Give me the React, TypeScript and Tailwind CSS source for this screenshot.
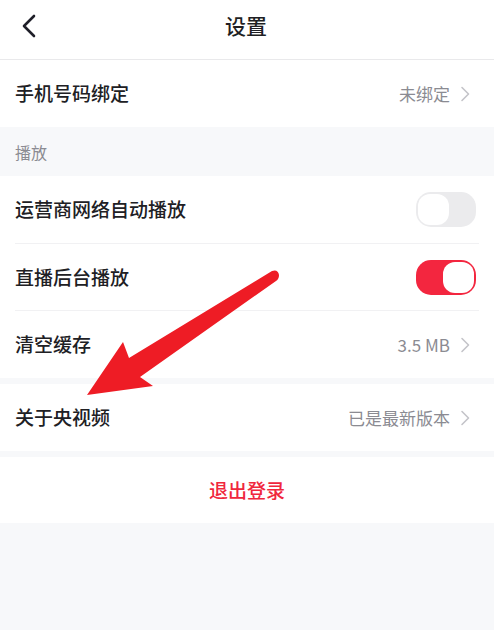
import type { ReactNode } from 'react'

const font = { fontFamily: '"Noto Sans CJK SC", "Noto Sans", sans-serif' }

function Chevron() {
  return (
    <svg width="12" height="16" viewBox="0 0 12 16" className="shrink-0">
      <path d="M3 1.5 L9.5 8 L3 14.5" fill="none" stroke="#c4c4c9" strokeWidth="1.6" strokeLinecap="round" strokeLinejoin="round" />
    </svg>
  )
}

function Toggle({ on }: { on: boolean }) {
  return (
    <div
      className={`w-[60px] h-[35px] mr-[3px] rounded-[15px] p-[2px] flex shrink-0 ${on ? 'bg-[#f3263f] justify-end' : 'bg-[#ebebed] justify-start'}`}
    >
      <div className="w-[31px] h-[31px] rounded-[12px] bg-white" />
    </div>
  )
}

function Row({ label, right, border = false, h = 'h-[67px]' }: { label: string; right: ReactNode; border?: boolean; h?: string }) {
  return (
    <div className={`bg-white px-[15px] ${h}`}>
      <div className={`h-full flex items-center justify-between ${border ? 'border-b border-[#f1f1f3]' : ''}`}>
        <span className="text-[19px] font-medium text-[#202024]">{label}</span>
        {right}
      </div>
    </div>
  )
}

function Value({ text }: { text: string }) {
  return (
    <div className="flex items-center gap-[9px] pr-[8px]">
      <span className="text-[17px] text-[#8b8b92]">{text}</span>
      <Chevron />
    </div>
  )
}

function Arrow() {
  return (
    <svg className="absolute inset-0 pointer-events-none" width="494" height="630" viewBox="0 0 494 630">
      <path
        d="M87 395 L123 342 L129 358 L272 271 Q278 269 279 275 Q279 279 276 281 L140 377 L153 386 Z"
        fill="#ee1c25"
      />
    </svg>
  )
}

export default function App() {
  return (
    <div className="relative w-[494px] h-[630px] bg-[#f7f8fa] overflow-hidden" style={font}>
      {/* Header */}
      <div className="h-[60px] bg-white border-b border-[#e9e9eb] flex items-center relative">
        <svg className="absolute left-[21px] top-[14px]" width="16" height="24" viewBox="0 0 16 24">
          <path d="M13 2 L3 12 L13 22" fill="none" stroke="#1f1f29" strokeWidth="2.6" strokeLinecap="round" strokeLinejoin="round" />
        </svg>
        <div className="flex-1 text-center text-[21px] font-medium text-[#1f1f24] -mt-[8px] pr-[2px]">设置</div>
      </div>

      <Row label="手机号码绑定" right={<Value text="未绑定" />} />

      <div className="h-[49px] px-[15px] flex items-center">
        <span className="text-[16px] text-[#8b8b92]">播放</span>
      </div>

      <Row label="运营商网络自动播放" right={<Toggle on={false} />} border h="h-[68px]" />
      <Row label="直播后台播放" right={<Toggle on />} border />
      <Row label="清空缓存" right={<Value text="3.5 MB" />} />

      <div className="h-[6px]" />
      <Row label="关于央视频" right={<Value text="已是最新版本" />} />
      <div className="h-[6px]" />

      <div className="h-[66px] bg-white flex items-center justify-center">
        <span className="text-[19px] font-medium text-[#f0273d]">退出登录</span>
      </div>

      <Arrow />
    </div>
  )
}
